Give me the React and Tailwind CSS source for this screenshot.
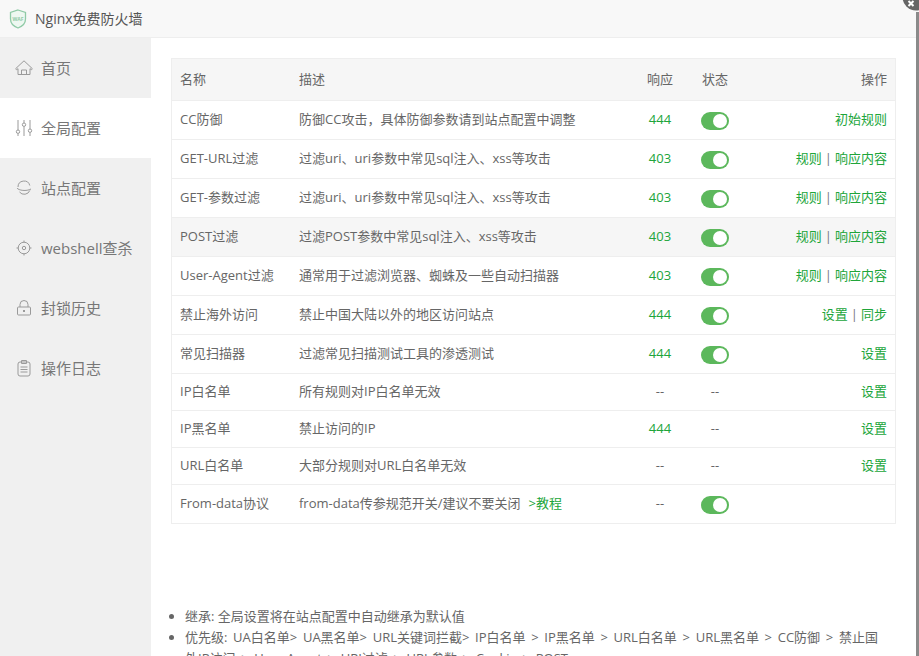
const font = { fontFamily: '"Open Sans", "Noto Sans CJK SC", sans-serif' };

const menu = [
  { label: "首页", icon: "home" },
  { label: "全局配置", icon: "sliders", active: true },
  { label: "站点配置", icon: "planet" },
  { label: "webshell查杀", icon: "target" },
  { label: "封锁历史", icon: "lock" },
  { label: "操作日志", icon: "log" },
];

const rows = [
  { name: "CC防御", desc: "防御CC攻击，具体防御参数请到站点配置中调整", code: "444", on: true, ops: ["初始规则"], h: "h-[39px]" },
  { name: "GET-URL过滤", desc: "过滤uri、uri参数中常见sql注入、xss等攻击", code: "403", on: true, ops: ["规则", "响应内容"], h: "h-[39px]" },
  { name: "GET-参数过滤", desc: "过滤uri、uri参数中常见sql注入、xss等攻击", code: "403", on: true, ops: ["规则", "响应内容"], h: "h-[39px]" },
  { name: "POST过滤", desc: "过滤POST参数中常见sql注入、xss等攻击", code: "403", on: true, ops: ["规则", "响应内容"], h: "h-[39px]", hover: true },
  { name: "User-Agent过滤", desc: "通常用于过滤浏览器、蜘蛛及一些自动扫描器", code: "403", on: true, ops: ["规则", "响应内容"], h: "h-[39px]" },
  { name: "禁止海外访问", desc: "禁止中国大陆以外的地区访问站点", code: "444", on: true, ops: ["设置", "同步"], h: "h-[39px]" },
  { name: "常见扫描器", desc: "过滤常见扫描测试工具的渗透测试", code: "444", on: true, ops: ["设置"], h: "h-[39px]" },
  { name: "IP白名单", desc: "所有规则对IP白名单无效", code: "--", ops: ["设置"], h: "h-[37px]" },
  { name: "IP黑名单", desc: "禁止访问的IP", code: "444", ops: ["设置"], h: "h-[37px]" },
  { name: "URL白名单", desc: "大部分规则对URL白名单无效", code: "--", ops: ["设置"], h: "h-[37px]" },
  { name: "From-data协议", desc: "from-data传参规范开关/建议不要关闭", link: ">教程", code: "--", on: true, ops: [], h: "h-[38px]" },
];

function MenuIcon({ type }) {
  const common = { width: 18, height: 18, viewBox: "0 0 18 18", fill: "none", stroke: "#9a9a9a", strokeWidth: 1 };
  if (type === "home") {
    return (
      <svg {...common}>
        <path d="M.8 9.500 9 1.800l8.200 7.700c.3.600-.3 1.300-1 1l-1.200-.8v5.800H3V9.700l-1.200.8c-.7.300-1.300-.4-1-1z" />
        <path d="M6.500 15.500v-4.500h5v4.500" />
      </svg>
    );
  }
  if (type === "sliders") {
    return (
      <svg {...common}>
        <path d="M3 1v10M3 14.500V17M9 1v3M9 7.500V17M15 1v9M15 13.500V17" />
        <circle cx="3" cy="12.700" r="1.700" />
        <circle cx="9" cy="5.700" r="1.700" />
        <circle cx="15" cy="11.700" r="1.700" />
      </svg>
    );
  }
  if (type === "planet") {
    return (
      <svg {...common}>
        <path d="M3 8a6 6 0 0 1 11.800-1.500" />
        <path d="M14.800 11.500A6 6 0 0 1 4.500 13" />
        <path d="M2 9c1.500 2.500 9.500 3.500 14 1" />
      </svg>
    );
  }
  if (type === "target") {
    return (
      <svg {...common}>
        <circle cx="9" cy="9" r="5.800" />
        <circle cx="9" cy="9" r="1.700" />
        <path d="M9 1.500v2M9 14.500v2M1.500 9h2M14.500 9h2" />
      </svg>
    );
  }
  if (type === "lock") {
    return (
      <svg {...common}>
        <path d="M5 8V5.500a4 4 0 0 1 8 0V8" />
        <rect x="2.500" y="8" width="13" height="8" rx="1" />
        <path d="M9 11v2" strokeWidth="2" />
      </svg>
    );
  }
  return (
    <svg {...common}>
      <rect x="3" y="3" width="12" height="14" rx="2" />
      <path d="M6.500 1.500h5v3h-5zM5.500 8h7M5.500 10.500h7M5.500 13h7" />
    </svg>
  );
}

function Toggle() {
  return (
    <div className="mt-[1px] flex h-[18px] w-[28px] items-center justify-end rounded-full bg-[#5cb85c] pr-[2px]">
      <div className="h-[14px] w-[14px] rounded-full bg-white"></div>
    </div>
  );
}

export default function App() {
  return (
    <div className="relative h-[656px] w-[919px] overflow-hidden bg-white text-[13px] text-[#666]" style={font}>
      {/* Title bar */}
      <div className="flex h-[38px] items-center gap-[8px] border-b border-[#eee] bg-[#f8f8f8] pl-[9px] text-[#555]">
        <svg width="18" height="20" viewBox="0 0 18 20">
          <path d="M9 1 16.500 3.500V10c0 4.500-3.500 7.500-7.500 9-4-1.500-7.500-4.500-7.500-9V3.500z" fill="#eef8f1" stroke="#8fcaa6" strokeWidth="1.300" />
          <text x="9" y="11.500" textAnchor="middle" fontSize="5" fontWeight="700" fill="#8fcaa6">WAF</text>
        </svg>
        <span className="text-[14px]">Nginx免费防火墙</span>
      </div>

      <div className="flex h-[618px]">
        {/* Sidebar */}
        <div className="w-[151px] shrink-0 bg-[#f0f0f0]">
          {menu.map((item) => (
            <div key={item.label} className={`flex h-[60px] items-center gap-[8px] pl-[15px] text-[15px] ${item.active ? "bg-white" : ""}`}>
              <MenuIcon type={item.icon} />
              <span className="text-[#777]">{item.label}</span>
            </div>
          ))}
        </div>

        {/* Content */}
        <div className="flex-1 pl-[20px] pr-[23px] pt-[20px]">
          <div className="w-[725px] border border-[#eee]">
            <div className="flex h-[42px] items-center border-b border-[#eee] bg-[#f6f6f6] px-[8px]">
              <div className="w-[119px]">名称</div>
              <div className="w-[338px]">描述</div>
              <div className="w-[46px] text-center">响应</div>
              <div className="w-[64px] text-center">状态</div>
              <div className="flex-1 text-right">操作</div>
            </div>
            {rows.map((row) => (
              <div key={row.name} className={`flex items-center border-b border-[#eee] px-[8px] last:border-b-0 ${row.h} ${row.hover ? "bg-[#f6f6f6]" : ""}`}>
                <div className="w-[119px]">{row.name}</div>
                <div className="w-[338px]">
                  {row.desc}
                  {row.link && <span className="ml-[8px] text-[#20a53a]">{row.link}</span>}
                </div>
                <div className={`w-[46px] text-center ${row.code === "--" ? "" : "text-[#20a53a]"}`}>{row.code}</div>
                <div className="flex w-[64px] justify-center">{row.on ? <Toggle /> : "--"}</div>
                <div className="flex-1 text-right text-[#20a53a]">
                  {row.ops.map((op, i) => (
                    <span key={op}>
                      {i > 0 && <span className="px-[3px] text-[#777]">|</span>}
                      {op}
                    </span>
                  ))}
                </div>
              </div>
            ))}
          </div>

          <ul className="mt-[82px] list-disc pl-[14px] pr-[11px] leading-[21px] marker:text-[#666]">
            <li>继承: 全局设置将在站点配置中自动继承为默认值</li>
            <li className="[word-spacing:2.3px]">优先级: UA白名单&gt; UA黑名单&gt; URL关键词拦截&gt; IP白名单 &gt; IP黑名单 &gt; URL白名单 &gt; URL黑名单 &gt; CC防御 &gt; 禁止国外IP访问 &gt; User-Agent &gt; URI过滤 &gt; URL参数 &gt; Cookie &gt; POST</li>
          </ul>
        </div>
      </div>

      {/* Edge of the page behind the dialog */}
      <div className="absolute bottom-0 right-0 top-[12px] w-[3px] bg-[#8a8a8a]"></div>
      <svg className="absolute right-0 top-0" width="17" height="11" viewBox="0 0 17 11">
        <circle cx="14" cy="-3" r="13.500" fill="#666" />
        <path d="M6.500 1 11.500 6M11.500 1 6.500 6" stroke="#fff" strokeWidth="2" />
      </svg>
    </div>
  );
}
